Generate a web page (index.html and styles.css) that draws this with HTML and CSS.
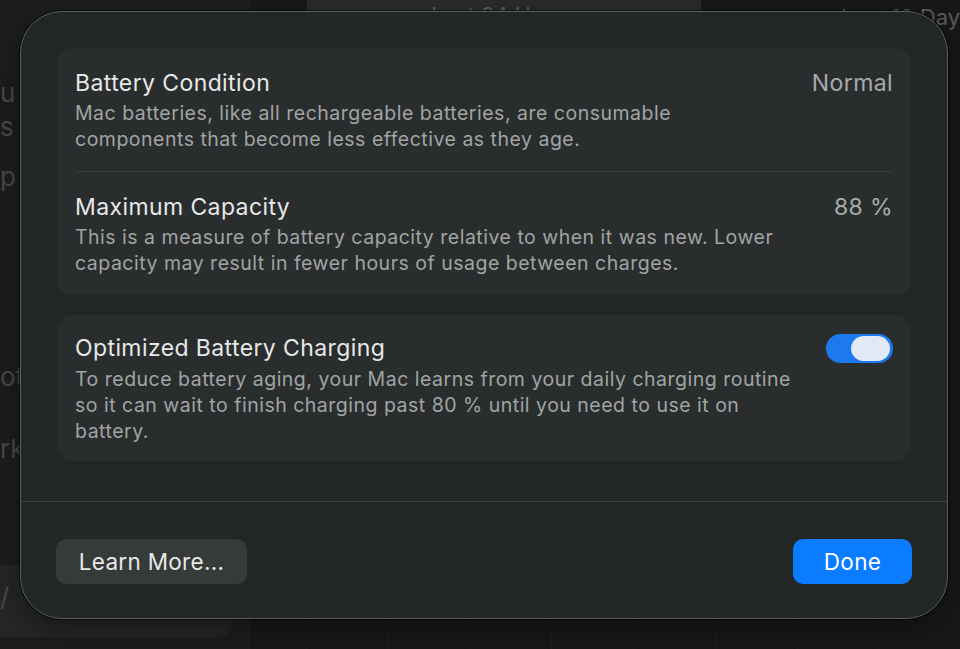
FILE: index.html
```html
<!DOCTYPE html>
<html lang="en">
<head>
  <meta charset="UTF-8">
  <meta name="viewport" content="width=device-width, initial-scale=1.0">
  <title>Battery Health</title>
  <link rel="stylesheet" href="styles.css">
</head>
<body>

  <div class="backdrop">
    <div class="sidebar">
      <div class="side-item" style="margin-top: 76px">u</div>
      <div class="side-item">s</div>
      <div class="side-item" style="margin-top: 16px">p</div>
      <div class="side-item" style="margin-top: 166px">ot</div>
      <div class="side-item" style="margin-top: 38px">rk</div>
      <div class="side-selected">/</div>
    </div>
    <div class="main">
      <div class="tabs">
        <div class="tab-gap"></div>
        <div class="tab active">Last 24 Hours</div>
        <div class="tab">Last 10 Days</div>
      </div>
      <div class="grid">
        <span></span><span></span><span></span><span></span><span></span>
        <span></span><span></span><span></span>
      </div>
    </div>
  </div>

  <div class="dialog">
    <div class="dialog-body">
      <div class="card">
        <div class="row">
          <div class="row-text">
            <div class="row-title">Battery Condition</div>
            <div class="row-desc">Mac batteries, like all rechargeable batteries, are consumable<br>components that become less effective as they age.</div>
          </div>
          <div class="row-value">Normal</div>
        </div>
        <div class="row-divider"></div>
        <div class="row">
          <div class="row-text">
            <div class="row-title">Maximum Capacity</div>
            <div class="row-desc">This is a measure of battery capacity relative to when it was new. Lower<br>capacity may result in fewer hours of usage between charges.</div>
          </div>
          <div class="row-value">88 %</div>
        </div>
      </div>

      <div class="card">
        <div class="row">
          <div class="row-text">
            <div class="row-title">Optimized Battery Charging</div>
            <div class="row-desc">To reduce battery aging, your Mac learns from your daily charging routine<br>so it can wait to finish charging past 80 % until you need to use it on<br>battery.</div>
          </div>
          <div class="toggle on"><div class="knob"></div></div>
        </div>
      </div>
    </div>

    <div class="dialog-divider"></div>

    <div class="dialog-footer">
      <button class="btn">Learn More...</button>
      <button class="btn primary">Done</button>
    </div>
  </div>

</body>
</html>
```

FILE: styles.css
```css
* {
  box-sizing: border-box;
}
body {
  margin: 0;
  width: 960px;
  height: 649px;
  overflow: hidden;
  background: #171818;
  font-family: 'Inter', 'Noto Sans', sans-serif;
  position: relative;
}

/* faded window behind the sheet */
.backdrop {
  display: flex;
  height: 100%;
}
.sidebar {
  width: 250px;
  background: #1c1d1d;
  border-right: 1px solid #242525;
  display: flex;
  flex-direction: column;
}
.side-item {
  margin-left: 0;
  font-size: 26px;
  line-height: 34px;
  color: #47494a;
}
.side-selected {
  margin-top: auto;
  margin-bottom: 12px;
  width: 232px;
  height: 72px;
  background: #252626;
  border-radius: 0 0 12px 0;
  color: #47494a;
  font-size: 26px;
  padding: 16px 0 0 0;
}
.main {
  flex: 1;
  display: flex;
  flex-direction: column;
  min-width: 0;
}
.tabs {
  display: flex;
  height: 36px;
  color: #5b5d5d;
  font-size: 22px;
  white-space: nowrap;
}
.tab-gap {
  width: 57px;
  flex-shrink: 0;
}
.tab {
  width: 394px;
  flex-shrink: 0;
  text-align: center;
  padding-top: 2px;
}
.tab.active {
  background: #2a2b2b;
  border-radius: 0 0 6px 6px;
}
.tab:last-child {
  width: auto;
  padding-left: 140px;
  padding-top: 4px;
}
.grid {
  flex: 1;
  display: flex;
  padding-left: 56px;
}
.grid span {
  width: 90px;
  border-left: 1px dashed #212222;
}

/* sheet */
.dialog {
  position: absolute;
  left: 20px;
  top: 11px;
  width: 928px;
  height: 608px;
  background: #222625;
  border: 1px solid #5b5f5e;
  border-radius: 42px;
  box-shadow: 0 0 0 1px rgba(0,0,0,0.6), 0 10px 30px rgba(0,0,0,0.4);
  display: flex;
  flex-direction: column;
}
.dialog-body {
  padding: 36px 36px 40px 36px;
  display: flex;
  flex-direction: column;
  gap: 20px;
}
.card {
  background: #2a2d2d;
  border-radius: 16px;
  padding: 0 18px;
}
.row {
  display: flex;
  justify-content: space-between;
  align-items: flex-start;
  padding: 21px 0 19px;
}
.card:last-child .row {
  padding: 19px 0 17px;
}
.row-title {
  font-size: 23px;
  letter-spacing: 0.4px;
  line-height: 28px;
  color: #e7e8e8;
}
.row-desc {
  margin-top: 3px;
  font-size: 19.5px;
  letter-spacing: 0.5px;
  line-height: 26px;
  color: #a1a4a4;
  white-space: nowrap;
}
.card:last-child .row-desc {
  margin-top: 4px;
}
.row-value {
  font-size: 23px;
  letter-spacing: 0.4px;
  line-height: 28px;
  color: #a8abab;
}
.row-divider {
  height: 1px;
  background: #3a3d3d;
}
.toggle {
  width: 67px;
  height: 29px;
  border-radius: 15px;
  background: #3a3d3d;
  padding: 2px 3px;
  display: flex;
}
.toggle.on {
  background: #1c79ee;
  justify-content: flex-end;
}
.knob {
  width: 39px;
  height: 25px;
  border-radius: 13px;
  background: #e1e9f8;
}
.dialog-divider {
  height: 1px;
  background: #3b3f3e;
}
.dialog-footer {
  display: flex;
  justify-content: space-between;
  padding: 37px 35px 0 35px;
}
.btn {
  width: 191px;
  height: 45px;
  padding: 0;
  border: none;
  border-radius: 10px;
  background: #363a39;
  color: #e8e9e9;
  font-family: inherit;
  font-size: 22.5px;
  letter-spacing: 0.3px;
  cursor: pointer;
}
.btn.primary {
  width: 119px;
  background: #0b7bff;
  color: #fff;
}
```
